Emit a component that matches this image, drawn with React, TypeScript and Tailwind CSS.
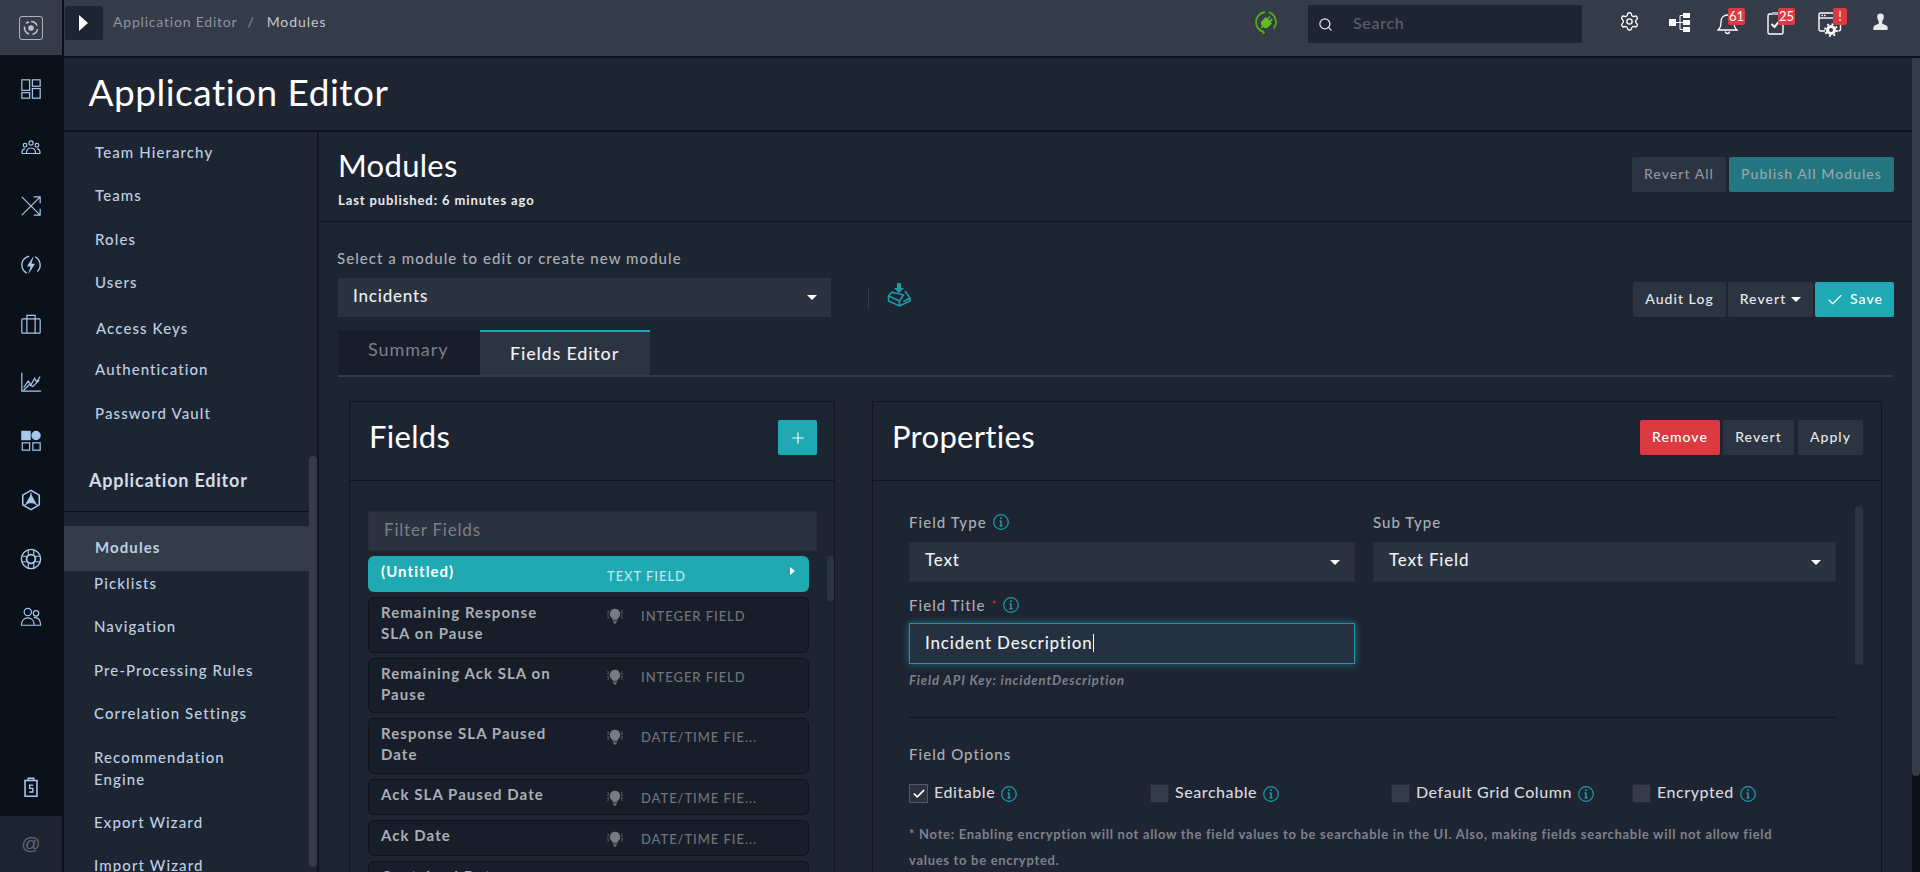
import { Plus, Search, Settings, Check } from 'lucide-react'

const railIcon = 'text-[#a6c8ee]'

function Svg({ children, size = 22, className = railIcon }: { children: React.ReactNode; size?: number; className?: string }) {
  return (
    <svg width={size} height={size} viewBox="0 0 24 24" fill="none" stroke="currentColor" strokeWidth="1.3" className={className}>
      {children}
    </svg>
  )
}

const railTop = [
  <Svg key="dash"><rect x="2" y="2" width="8.5" height="11.5" /><rect x="13.5" y="2" width="8.5" height="7" /><rect x="2" y="16" width="8.5" height="6" /><rect x="13.5" y="11.5" width="8.5" height="10.5" /></Svg>,
  <Svg key="team"><circle cx="12" cy="6.5" r="2.3" /><circle cx="5.5" cy="9" r="2" /><circle cx="18.5" cy="9" r="2" /><path d="M7 18c0-3.5 2-6 5-6s5 2.500 5 6zM2 18c0-3 1-5 3.500-5M22 18c0-3-1-5-3.500-5M2 18h20" /></Svg>,
  <Svg key="shuffle"><path d="M2 2l20 20M22 2L2 22M15 2h7v7M22 15v7h-7" /></Svg>,
  <Svg key="bolt"><path d="M16.500 3.200A9.800 9.800 0 0 1 19 19M7.500 20.800A9.800 9.800 0 0 1 5 5 9.800 9.800 0 0 1 10 2.400" strokeWidth="1.500" /><path d="M15 2L7.500 13.500h4L9 22l7.500-11.500h-4z" fill="currentColor" stroke="none" /></Svg>,
  <Svg key="case"><rect x="2" y="6.500" width="20" height="15.500" rx="1" /><path d="M7.500 6.500V22M16.500 6.500V22M7.500 6.500V2.500h9v4" /></Svg>,
  <Svg key="chart"><path d="M2 2v20h21M4 18l5-7 3 4 4-7 2 4 4-6M4 21l6-6 4 2 7-7" /></Svg>,
  <Svg key="apps"><rect x="2" y="1.500" width="9" height="9" fill="currentColor" /><circle cx="17.500" cy="6" r="4.500" fill="currentColor" /><rect x="2.500" y="14" width="8" height="8" /><rect x="14" y="14" width="8" height="8" /></Svg>,
  <Svg key="cube"><path d="M12 1.500l9 5.200v10.600l-9 5.200-9-5.200V6.700z" strokeWidth="1.700" /><path d="M12 4v6M5 17.500l5-3M19 17.500l-5-3" /><path d="M12 7l4.500 8h-9z" fill="currentColor" /></Svg>,
  <Svg key="buoy"><circle cx="12" cy="12" r="10.500" strokeWidth="1.500" /><circle cx="12" cy="12" r="4.800" strokeWidth="2" /><path d="M9 2v5.500M15 2v5.500M9 16.500V22M15 16.500V22M2 9h5.500M2 15h5.500M16.500 9H22M16.500 15H22" /></Svg>,
  <Svg key="users"><circle cx="8.500" cy="6.500" r="4" /><circle cx="17.500" cy="8" r="3" /><path d="M1.500 21c0-5 3-8 7-8s7 3 7 8zM15 12.500c4 0 7.500 2.500 7.500 8.500H15.500" /></Svg>,
]

const sideTop = [
  { label: 'Team Hierarchy', row: 'h-[41px] pl-[31px]' },
  { label: 'Teams', row: 'h-[44px] pl-[31px]' },
  { label: 'Roles', row: 'h-[44px] pl-[31px]' },
  { label: 'Users', row: 'h-[42px] pl-[31px]' },
  { label: 'Access Keys', row: 'h-[50px] pl-[32px]' },
  { label: 'Authentication', row: 'h-[32px] pl-[31px]' },
  { label: 'Password Vault', row: 'h-[57px] pl-[31px]' },
]

const sideBottom = [
  { label: 'Picklists', row: 'h-[24px]' },
  { label: 'Navigation', row: 'h-[61px]' },
  { label: 'Pre-Processing Rules', row: 'h-[28px]' },
  { label: 'Correlation Settings', row: 'h-[58px]' },
  { label: 'Recommendation Engine', row: 'h-[52px] pr-[60px]' },
  { label: 'Export Wizard', row: 'h-[56px]' },
  { label: 'Import Wizard', row: 'h-[30px]' },
]

const fieldRows = [
  { name: 'Remaining Response SLA on Pause', type: 'INTEGER FIELD', h: 'h-[56px]' },
  { name: 'Remaining Ack SLA on Pause', type: 'INTEGER FIELD', h: 'h-[55px]' },
  { name: 'Response SLA Paused Date', type: 'DATE/TIME FIE...', h: 'h-[56px]' },
  { name: 'Ack SLA Paused Date', type: 'DATE/TIME FIE...', h: 'h-[36px]' },
  { name: 'Ack Date', type: 'DATE/TIME FIE...', h: 'h-[36px]' },
  { name: 'Contained Date', type: 'DATE/TIME FIE...', h: 'h-[36px]' },
]

function Btn({ children, className = '' }: { children: React.ReactNode; className?: string }) {
  return (
    <button className={`h-[35px] pb-[2px] rounded-[2px] bg-[#2d3441] text-[14px] font-medium tracking-[1.05px] text-[#e4e7ea] flex items-center justify-center ${className}`}>
      {children}
    </button>
  )
}

function Caret({ className = 'ml-[6px]' }: { className?: string }) {
  return <span className={`inline-block w-0 h-0 border-x-[5px] border-x-transparent border-t-[5px] border-t-white ${className}`} />
}

function Dropdown({ value }: { value: string }) {
  return (
    <div className="h-[40px] pb-[4px] bg-[#2b3240] border border-[#262c38] flex items-center justify-between pl-[15px] pr-[14px] text-[17px] font-medium tracking-[0.8px] text-[#eceef0]">
      {value}
      <Caret className="mt-[4px]" />
    </div>
  )
}

function Hint() {
  return (
    <svg width="16" height="16" viewBox="0 0 16 16" fill="none" stroke="#1f9ca8" strokeWidth="1.200" className="shrink-0">
      <circle cx="8" cy="8" r="7.300" />
      <path d="M8 6.800v5M6.500 6.900H8M6.500 11.800h3" strokeWidth="1.500" />
      <circle cx="8" cy="4.300" r="1" fill="#1f9ca8" stroke="none" />
    </svg>
  )
}

function Bulb() {
  return (
    <svg width="16" height="16" viewBox="0 0 16 16" className="text-[#777b82]" fill="currentColor">
      <path d="M8 .8a5.200 5.200 0 0 0-3.300 9.200c.6.500.8 1.200.9 1.800h4.800c.1-.6.300-1.300.9-1.800A5.200 5.200 0 0 0 8 .8zM5.800 12.400h4.400v1H5.800zM6.300 14h3.400l-.8 1.500H7.100z" />
      <path d="M0 5h2M0 8h2M.5 2.500l1.500 1M.5 10.500l1.500-1M14 5h2M14 8h2M15.500 2.500l-1.500 1M15.500 10.500l-1.500-1" stroke="currentColor" strokeWidth="0.8" />
    </svg>
  )
}

function Option({ label, checked }: { label: string; checked?: boolean }) {
  return (
    <div className="flex items-center h-[19px]">
      <span className={`w-[19px] h-[19px] flex items-center justify-center border ${checked ? 'bg-[#2b3240] border-[#565c67]' : 'bg-[#343b49] border-[#262b35]'}`}>
        {checked && <Check size={14} strokeWidth={3} className="text-white" />}
      </span>
      <span className="ml-[6px] mr-[6px] pb-[3px] text-[16px] font-medium tracking-[0.55px] text-[#d5d8dc]">{label}</span>
      <Hint />
    </div>
  )
}

function TopBadge({ text, className = 'w-[17px]' }: { text: string; className?: string }) {
  return (
    <span className={`absolute -top-[3px] left-[11px] h-[17px] rounded-[2px] bg-[#dc3a42] text-white text-[13px] leading-[17px] text-center ${className}`}>
      {text}
    </span>
  )
}

export default function App() {
  return (
    <div className="w-[1920px] h-[872px] overflow-hidden flex bg-[#1e2532] font-['Lato','Noto_Sans',sans-serif]">
      {/* left rail */}
      <div className="w-16 shrink-0 flex flex-col bg-[#0b1119]">
        <div className="w-[62px] h-[55px] bg-[#343b49] flex items-center justify-center mb-[23px]">
          <span className="w-[24px] h-[24px] rounded-[3px] border-[1.5px] border-[#aeb3ba] flex items-center justify-center">
            <svg width="16" height="16" viewBox="0 0 16 16" fill="none" stroke="#c2c6cc" strokeWidth="1.500">
              <circle cx="8" cy="8" r="2" fill="#c2c6cc" />
              <path d="M8 1.500a6.500 6.500 0 0 1 6 4M14.500 9a6.500 6.500 0 0 1-5 5.300M6 14a6.500 6.500 0 0 1-4.400-7.500M3 3.500A6.500 6.500 0 0 1 6 2" />
            </svg>
          </span>
        </div>
        <div className="w-[62px] flex flex-col items-center gap-[36.7px]">{railTop}</div>
        <div className="w-[62px] flex justify-center mt-auto mb-[18px]">
          <Svg>
            <path d="M9 5V2.500h6V5M4.500 5h15M5.500 5v17h13V5z" strokeWidth="1.700" />
            <path d="M14.500 10h-4v3.500h3.500v4h-4" strokeWidth="1.500" />
          </Svg>
        </div>
        <div className="w-[62px] h-[56px] bg-[#1e2532] flex items-center justify-center text-[19px] text-[#5f6773] font-['Liberation_Sans',sans-serif]">@</div>
      </div>

      <div className="flex-1 min-w-0 flex flex-col">
        {/* top bar */}
        <div className="h-[58px] shrink-0 bg-[#343b49] border-b-2 border-[#0e131b] flex items-start">
          <button className="ml-px mt-[6px] w-[38px] h-[34px] rounded-[2px] bg-[#1e2532] flex items-center pl-[14px]">
            <span className="w-0 h-0 border-y-[8px] border-y-transparent border-l-[9px] border-l-white" />
          </button>
          <div className="ml-[10px] mt-[13px] text-[14px] leading-[18px] tracking-[0.8px] flex text-[#8e95a0]">
            <span>Application Editor</span>
            <span className="ml-[10px]">/</span>
            <span className="ml-[12px] text-[#c2c7ce] tracking-[0.95px]">Modules</span>
          </div>
          <div className="ml-auto mt-[10px] mr-[30.500px]">
            <svg width="24" height="24" viewBox="0 0 24 24" fill="none" stroke="#55a81a" strokeWidth="1.800">
              <path d="M14.500 2.300A10 10 0 0 1 19.500 18.500M10 21.800A10 10 0 0 1 5 5 10 10 0 0 1 11 2" />
              <path d="M5 20l5 2.500-1 1.500" strokeWidth="1.500" />
              <path d="M15.500 6l-2.300 2.300-1.500-1.300-3.700 3.700a4 4 0 0 0 0 5.300l-1.500 1.500 1 1 1.500-1.500a4 4 0 0 0 5.300 0l3.700-3.700-1.300-1.500 2.300-2.300-1.300-1.200-2.300 2.300-1.200-1.200 2.300-2.300z" fill="#62bb1f" stroke="none" />
            </svg>
          </div>
          <div className="mt-[5px] w-[274px] h-[38px] rounded-[2px] bg-[#1e2532] flex items-center pl-[10px] mr-[36.500px]">
            <Search size={15} className="text-[#e6e8ea]" />
            <span className="ml-[20px] pb-[3px] text-[16px] font-medium tracking-[0.7px] text-[#5a616d]">Search</span>
          </div>
          <div className="mt-[11px] flex items-start text-white">
            <Settings size={21} strokeWidth={1.5} />
            <span className="ml-[29.500px] mt-[1px]">
              <svg width="21" height="21" viewBox="0 0 21 21" fill="white" stroke="white">
                <rect x="0" y="7" width="7" height="7" stroke="none" />
                <rect x="14" y="1" width="7" height="5" stroke="none" />
                <rect x="14" y="8" width="7" height="5" stroke="none" />
                <rect x="14" y="15" width="7" height="5" stroke="none" />
                <path d="M7 10.500h4M11 3.500v14M11 3.500h3M11 10.500h3M11 17.500h3" fill="none" />
              </svg>
            </span>
            <span className="relative ml-[27px] w-[21px] h-[21px]">
              <svg width="21" height="24" viewBox="0 0 21 24" fill="none" stroke="white" strokeWidth="1.300">
                <path d="M1 19c2-1.500 3-3 3-8 0-4 2.500-7 6.500-7s6.500 3 6.500 7c0 5 1 6.500 3 8zM8.500 20.500a2 2 0 0 0 4 0" />
              </svg>
              <TopBadge text="61" />
            </span>
            <span className="relative ml-[29px] w-[21px] h-[21px]">
              <svg width="18" height="24" viewBox="0 0 18 24" fill="none" stroke="white" strokeWidth="1.400">
                <rect x="1" y="3" width="15" height="20" rx="1.500" />
                <rect x="5" y="1" width="7" height="3" fill="#aab" stroke="none" />
                <path d="M4.500 13l3 3 5-6" strokeWidth="2" />
              </svg>
              <TopBadge text="25" />
            </span>
            <span className="relative ml-[30px] w-[24px] h-[24px]">
              <svg width="26" height="26" viewBox="0 0 26 26" fill="none" stroke="white" strokeWidth="1.400">
                <path d="M7 20H2.500A1.500 1.500 0 0 1 1 18.500v-15A1.500 1.500 0 0 1 2.500 2h20v16a2 2 0 0 1-2 2" />
                <path d="M1 7h21" />
                <path d="M3.500 4.500h5" strokeWidth="1.500" strokeDasharray="1.500 1" />
                <circle cx="13" cy="19" r="3.500" strokeWidth="3" />
                <circle cx="13" cy="19" r="6" strokeWidth="1.800" strokeDasharray="2 2.700" />
              </svg>
              <TopBadge text="!" className="w-[14px] left-[15px]" />
            </span>
            <span className="ml-[29px] mr-[30px] mt-[1px]">
              <svg width="19" height="20" viewBox="0 0 20 21" fill="#e6e8ea">
                <path d="M10 1.500a3.500 3.500 0 0 0-3.500 3.500c0 2.500 1.500 4 1.800 6 .1 1-.8 1.700-2.800 2.500-2 .8-3 1.500-3 3V19h15v-2.500c0-1.500-1-2.200-3-3-2-.8-2.900-1.500-2.800-2.500.3-2 1.800-3.500 1.800-6A3.500 3.500 0 0 0 10 1.500z" />
              </svg>
            </span>
          </div>
        </div>

        {/* page title */}
        <div className="flex-1 min-h-0 flex">
          <div className="flex-1 min-w-0 flex flex-col">
            <div className="h-[74px] shrink-0 border-b-2 border-[#0e131b] pl-[24.500px] flex items-center pb-[4px]">
              <h1 className="text-[37px] leading-[44px] tracking-[0.5px] text-white">Application Editor</h1>
            </div>

            <div className="flex-1 min-h-0 flex">
              {/* sidebar */}
              <div className="w-[255px] shrink-0 border-r-2 border-[#11161e] flex">
                <div className="w-[245px]">
                  {sideTop.map(s => (
                    <div key={s.label} className={`flex items-center text-[15px] font-medium tracking-[1.1px] text-[#bccfe3] ${s.row}`}>{s.label}</div>
                  ))}
                  <div className="h-[70px] pt-[8px] pl-[25px] border-b border-[#0c1016] flex items-center text-[18px] font-bold tracking-[0.8px] text-[#cfdcea]">
                    Application Editor
                  </div>
                  <div className="mt-[14px] h-[45px] bg-[#343b49] pl-[31px] pb-[2px] flex items-center text-[15px] font-bold tracking-[1.1px] text-[#bccfe3]">Modules</div>
                  {sideBottom.map(s => (
                    <div key={s.label} className={`flex items-center pl-[30px] text-[15px] leading-[22px] font-medium tracking-[1.1px] text-[#bccfe3] ${s.row}`}>{s.label}</div>
                  ))}
                </div>
                <div className="w-2 pt-[324px]">
                  <div className="h-[411px] rounded-[4px] bg-[#343b49]" />
                </div>
              </div>

              {/* content */}
              <div className="flex-1 min-w-0 flex flex-col">
                <div className="h-[90px] shrink-0 border-b border-[#11161e] pl-[19px] pr-[18px] flex justify-between">
                  <div className="pt-[14px]">
                    <div className="text-[31px] leading-[38px] tracking-[0.3px] text-white">Modules</div>
                    <div className="mt-[7px] text-[13px] leading-[18px] font-bold tracking-[0.9px] text-[#e8eaec]">Last published: 6 minutes ago</div>
                  </div>
                  <div className="pt-[25px] flex gap-[3px]">
                    <Btn className="w-[94px] !text-[#8f959d]">Revert All</Btn>
                    <Btn className="w-[165px] !bg-[#23767f] !text-[#97a8ac]">Publish All Modules</Btn>
                  </div>
                </div>

                <div className="px-[19px]">
                  <div className="mt-[26px] -ml-px text-[15px] leading-[20px] font-medium tracking-[1.05px] text-[#a9aeb5]">Select a module to edit or create new module</div>
                  <div className="mt-[10px] flex items-start">
                    <div className="w-[493px]">
                      <div className="h-[39px] pb-[3px] bg-[#2b3240] flex items-center justify-between pl-[15px] pr-[14px] text-[17px] font-medium tracking-[0.8px] text-[#eceef0]">
                        Incidents
                        <Caret className="mt-[3px]" />
                      </div>
                    </div>
                    <span className="ml-[37px] mt-[9px] w-px h-[21px] bg-[#343b49]" />
                    <span className="ml-[18px] mt-[4px]">
                      <svg width="25" height="25" viewBox="0 0 25 25" fill="none" stroke="#1f9ca8" strokeWidth="1.500">
                        <path d="M10 1h4v5h3l-5 5-5-5h3z" fill="#1f9ca8" stroke="none" />
                        <path d="M5 10L1.500 14l11 5 4-6zM5 10l2 1M18 9l5 7-6.500 3.500M1.500 14v5l11 5 10.500-5v-3M12.500 19v5" />
                      </svg>
                    </span>
                    <div className="ml-auto -mr-px mt-[4px] flex">
                      <Btn className="w-[93px] text-[#e8eaec]">Audit Log</Btn>
                      <Btn className="ml-[2px] w-[85px] text-[#e8eaec]">Revert<Caret className="ml-[5px] mt-[2px]" /></Btn>
                      <Btn className="ml-[2px] w-[79px] !bg-[#20a9b3] gap-[6px] text-white"><Check size={18} strokeWidth={1.5} className="mt-[2px]" />Save</Btn>
                    </div>
                  </div>

                  {/* tabs */}
                  <div className="mt-[13px] flex border-b-2 border-[#343b49] h-[47px]">
                    <div className="w-[142px] h-[45px] bg-[#171e29] pl-[30px] pt-[6px] text-[18px] tracking-[0.9px] text-[#79808b]">Summary</div>
                    <div className="w-[170px] h-[45px] bg-[#2d3441] border-t-2 border-[#20a9b3] pl-[30px] pt-[8px] text-[18px] font-medium tracking-[0.8px] text-[#eef0f2]">Fields Editor</div>
                  </div>

                  {/* cards */}
                  <div className="mt-[24px] mx-[11px] flex gap-[37px] items-start h-[600px]">
                    <div className="w-[486px] h-full border border-[#11161e] flex flex-col">
                      <div className="h-[79px] shrink-0 border-b border-[#11161e] pl-[19px] pr-[17px] pt-[15px] flex justify-between items-start">
                        <div className="text-[31px] leading-[38px] tracking-[0.3px] text-white">Fields</div>
                        <button className="mt-[3px] w-[39px] h-[35px] rounded-[2px] bg-[#20a9b3] flex items-center justify-center text-white">
                          <Plus size={18} strokeWidth={1.5} />
                        </button>
                      </div>
                      <div className="pl-[18px] pt-[30px]">
                        <div className="w-[449px] h-[40px] pb-[2px] bg-[#2b3240] border border-[#262c38] pl-[15px] flex items-center text-[17px] tracking-[0.8px] text-[#7b7f86]">Filter Fields</div>
                        <div className="mt-[5px] flex">
                          <div className="w-[441px] flex flex-col gap-[5px]">
                            <div className="relative h-[36px] rounded-[6px] bg-[#20a9b3] flex pl-[13px]">
                              <div className="w-[226px] pt-[5px] text-[15px] leading-[21px] font-bold tracking-[1.05px] text-white">(Untitled)</div>
                              <div className="pt-[11px] text-[13px] leading-[18px] font-medium tracking-[0.95px] text-[#bfe6ea]">TEXT FIELD</div>
                              <span className="absolute left-[422px] top-[11px] w-0 h-0 border-y-[4.500px] border-y-transparent border-l-[5px] border-l-white" />
                            </div>
                            {fieldRows.map(r => (
                              <div key={r.name} className={`rounded-[6px] bg-[#171e29] border border-[#0e131a] flex pl-[12px] ${r.h}`}>
                                <div className="w-[226px] pr-[46px] pt-[4px] text-[15px] leading-[21px] font-bold tracking-[1.05px] text-[#a9aeb5]">{r.name}</div>
                                <div className="w-[34px] pt-[10px]"><Bulb /></div>
                                <div className="pt-[9px] text-[13px] leading-[18px] font-medium tracking-[0.95px] text-[#6f747b]">{r.type}</div>
                              </div>
                            ))}
                          </div>
                          <div className="ml-[18px] w-[7px] h-[45px] rounded-[4px] bg-[#2d3441]" />
                        </div>
                      </div>
                    </div>

                    <div className="flex-1 min-w-0 h-full border border-[#11161e] flex flex-col">
                      <div className="h-[79px] shrink-0 border-b border-[#11161e] pl-[19px] pr-[18px] pt-[15px] flex items-start">
                        <div className="text-[31px] leading-[38px] tracking-[0.3px] text-white">Properties</div>
                        <div className="ml-auto mt-[3px] flex">
                          <Btn className="w-[80px] !bg-[#dc3a42] text-white">Remove</Btn>
                          <Btn className="ml-[3px] w-[71px]">Revert</Btn>
                          <Btn className="ml-[4px] w-[65px]">Apply</Btn>
                        </div>
                      </div>
                      <div className="pl-[36px] flex">
                        <div className="w-[927px] pt-[32px]">
                          <div className="grid grid-cols-[446px_463px] gap-x-[18px]">
                            <div>
                              <div className="h-[20px] pb-[2px] flex items-center gap-[6px] text-[15px] font-medium tracking-[1.05px] text-[#a9aeb5]">Field Type <Hint /></div>
                              <div className="mt-[9px]"><Dropdown value="Text" /></div>
                            </div>
                            <div>
                              <div className="h-[20px] pb-[2px] flex items-center text-[15px] font-medium tracking-[1.05px] text-[#a9aeb5]">Sub Type</div>
                              <div className="mt-[9px]"><Dropdown value="Text Field" /></div>
                            </div>
                          </div>
                          <div className="mt-[14px] h-[20px] pb-[2px] flex items-center text-[15px] font-medium tracking-[1.05px] text-[#a9aeb5]">
                            Field Title
                            <span className="ml-[6px] text-[12px] text-[#c0392b]">*</span>
                            <span className="ml-[5px]"><Hint /></span>
                          </div>
                          <div className="mt-[7px] w-[446px] h-[41px] pb-[2px] bg-[#253041] border border-[#2596a5] shadow-[0_0_8px_rgba(32,169,179,0.55)] pl-[15px] flex items-center text-[17px] font-medium tracking-[0.8px] text-[#eef0f2]">
                            Incident Description<span className="inline-block w-px h-[18px] bg-white" />
                          </div>
                          <div className="mt-[8px] text-[13px] leading-[16px] italic font-bold tracking-[0.9px] text-[#7d8189]">Field API Key: incidentDescription</div>
                          <div className="mt-[29px] h-px bg-[#11161e]" />
                          <div className="mt-[27px] h-[20px] pb-[2px] flex items-center text-[15px] font-medium tracking-[1.05px] text-[#a9aeb5]">Field Options</div>
                          <div className="mt-[19px] grid grid-cols-[241px_241px_241px_1fr]">
                            <Option label="Editable" checked />
                            <Option label="Searchable" />
                            <Option label="Default Grid Column" />
                            <Option label="Encrypted" />
                          </div>
                          <p className="mt-[18px] pr-[30px] text-[13px] leading-[26px] font-bold tracking-[0.7px] text-[#7d8189]">
                            * Note: Enabling encryption will not allow the field values to be searchable in the UI. Also, making fields searchable will not allow field values to be encrypted.
                          </p>
                        </div>
                        <div className="ml-[19px] mt-[25px] w-[8px] h-[159px] rounded-[4px] bg-[#2d3441]" />
                      </div>
                    </div>
                  </div>
                </div>
              </div>
            </div>
          </div>

          {/* page scrollbar */}
          <div className="w-2 shrink-0 bg-[#0b1119]">
            <div className="h-[718px] rounded-b-[4px] bg-[#343b49]" />
          </div>
        </div>
      </div>
    </div>
  )
}
